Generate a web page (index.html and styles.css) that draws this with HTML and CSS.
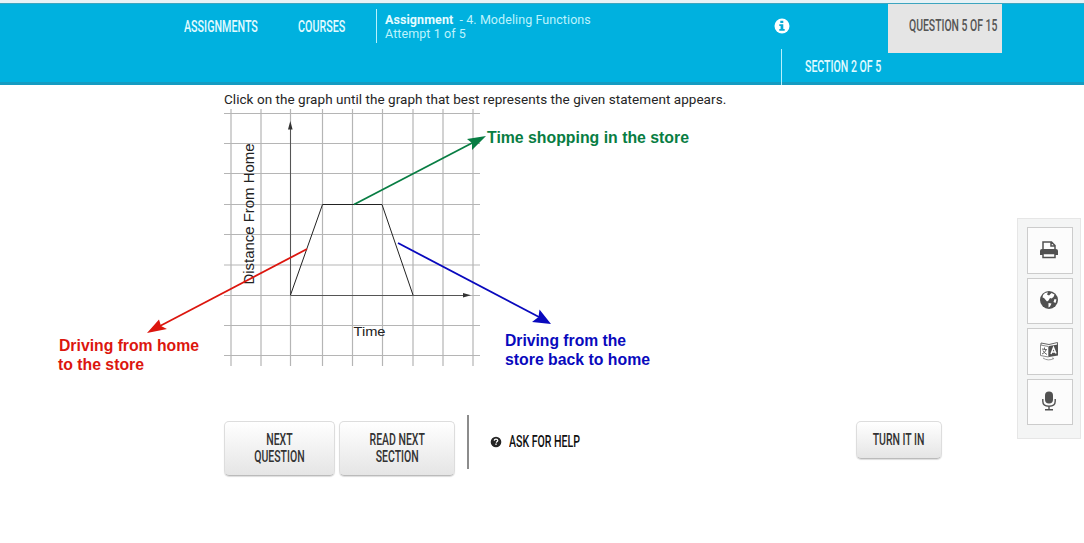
FILE: index.html
```html
<!DOCTYPE html>
<html lang="en">
<head>
    <meta charset="UTF-8">
    <meta name="viewport" content="width=device-width, initial-scale=1.0">
    <title>Assignment - 4. Modeling Functions</title>
    <link rel="stylesheet" href="styles.css">
</head>
<body>
    <!-- Top bar -->
    <header class="topbar">
        <nav class="nav">
            <a class="nav-assignments"><span class="narrow">ASSIGNMENTS</span></a>
            <a class="nav-courses"><span class="narrow">COURSES</span></a>
        </nav>
        <div class="assignment">
            <div class="assignment-title"><b>Assignment</b> <span>- 4. Modeling Functions</span></div>
            <div class="attempt">Attempt 1 of 5</div>
        </div>
        <div class="status">
            <div class="status-row">
                <svg class="info" viewBox="0 0 16 16">
                    <circle cx="8" cy="8" r="7.5" fill="#fff"/>
                    <path d="M6.3 2.8h3v2.3h-3zM5.3 6.3h4v4.7h1.4v1.7H5.3V11h1.3V8H5.3z" fill="#08a9d4"/>
                </svg>
                <div class="question"><span class="narrow">QUESTION 5 OF 15</span></div>
            </div>
            <div class="section"><span class="narrow">SECTION 2 OF 5</span></div>
        </div>
    </header>

    <div class="page">
        <main>
            <p class="instruction">Click on the graph until the graph that best represents the given statement appears.</p>

            <!-- Graph with notes -->
            <svg class="graph" width="1017" height="270" viewBox="0 107 1017 270">
                <path class="grid" d="M231 109V366M261 109V366M290.500 109V366M322.500 109V366M352.500 109V366M382.500 109V366M413 109V366M443 109V366M473 109V366M224 113.500H480M224 143.500H480M224 173.500H480M224 204.500H480M224 234.500H480M224 265H480M224 295.500H480M224 325.500H480M224 355.500H480"/>
                <path class="axis" d="M290.500 295.500V128M290.500 295.500H465"/>
                <path class="tip" d="M290.300 121l2.300 8.500h-4.600zM471 295.300l-8 2.300v-4.600z"/>
                <path class="curve" d="M290.500 295L322.500 204.500H382L413 295"/>
                <text class="axis-label" transform="translate(253.500 284.500) rotate(-90)" textLength="141" lengthAdjust="spacingAndGlyphs">Distance From Home</text>
                <text class="axis-label time" x="353.500" y="335.500" textLength="32" lengthAdjust="spacingAndGlyphs">Time</text>

                <g class="note green">
                    <path d="M354 204.500L474 142"/>
                    <polygon points="486,136 467,139 472,143 472,150"/>
                    <text x="487" y="143" textLength="202" lengthAdjust="spacingAndGlyphs">Time shopping in the store</text>
                </g>
                <g class="note red">
                    <path d="M307 249L160 326"/>
                    <polygon points="147,333 159,319.500 161,326 167,329"/>
                    <text x="59" y="351" textLength="140" lengthAdjust="spacingAndGlyphs">Driving from home</text>
                    <text x="58" y="370" textLength="86" lengthAdjust="spacingAndGlyphs">to the store</text>
                </g>
                <g class="note blue">
                    <path d="M398 243L539 317"/>
                    <polygon points="551,324 539.500,309.500 538.500,317 532,322"/>
                    <text x="505" y="346" textLength="121" lengthAdjust="spacingAndGlyphs">Driving from the</text>
                    <text x="505" y="365" textLength="145" lengthAdjust="spacingAndGlyphs">store back to home</text>
                </g>
            </svg>

            <!-- Bottom buttons -->
            <div class="actions">
                <button class="btn btn-next"><span class="narrow">NEXT<br>QUESTION</span></button>
                <button class="btn btn-read"><span class="narrow">READ NEXT<br>SECTION</span></button>
                <div class="help">
                    <svg viewBox="0 0 12 12">
                        <circle cx="6" cy="6" r="5.300" fill="#252525"/>
                        <path d="M4.200 4.700Q4.400 3.200 6 3.200T7.800 4.600Q7.800 5.500 6 6.500" fill="none" stroke="#fff" stroke-width="1.300"/>
                        <rect x="5.300" y="7.500" width="1.400" height="1.400" fill="#fff"/>
                    </svg>
                    <span class="narrow">ASK FOR HELP</span>
                </div>
                <button class="btn btn-turn"><span class="narrow">TURN IT IN</span></button>
            </div>
        </main>

        <!-- Side tools -->
        <aside class="tools">
            <button class="tool">
                <svg viewBox="0 0 20 20">
                    <path d="M4 10V2h8.500L16 5.500V10M12 2v4h4" fill="none" stroke="#515151" stroke-width="1.500"/>
                    <path d="M1 11q0-2 2-2h14q2 0 2 2v4H1z" fill="#515151"/>
                    <path d="M4 13.500v4h12v-4z" fill="#fff" stroke="#515151" stroke-width="1.500"/>
                </svg>
            </button>
            <button class="tool">
                <svg viewBox="0 0 20 20">
                    <circle cx="10" cy="10" r="9" fill="#515151"/>
                    <path d="M6 3L9 2.300 8 4.500 10 5.500 12.500 3 15.500 4.500 14.500 7 12.500 8.500 11 8 9.500 10.500 8 11.500 5 8 3.500 7.500 4 5zM9.500 13L12.500 13.500 11 16.500 9.500 17.500zM15.500 9L17.500 9.500 16.500 13 14.500 12z" fill="#fff"/>
                </svg>
            </button>
            <button class="tool">
                <svg viewBox="0 0 20 20">
                    <path d="M10 3.500L18.500 1.500V4M10 3.500L2 2V4" fill="none" stroke="#666"/>
                    <path d="M1.500 4L9.500 5.500V16L1.500 14.500z" fill="#fff" stroke="#888"/>
                    <path d="M10 5L19 3.500V14.500L10 16z" fill="#515151"/>
                    <path d="M3 8l5 .7M5.500 6.500v2M7 9q-1 3-4 4M4 9.500q1 2.500 4 4" fill="none" stroke="#666"/>
                    <path d="M12 13l2.500-6.500L17 12.500M13 11h3" fill="none" stroke="#fff" stroke-width="1.400"/>
                    <path d="M4 17q5 3.500 11 .5M15 17.500l-2-.5" fill="none" stroke="#999"/>
                </svg>
            </button>
            <button class="tool">
                <svg viewBox="0 0 20 20">
                    <rect x="6" y="0.500" width="8" height="12" rx="4" fill="#515151"/>
                    <path d="M3.800 8v2.300q0 5 6.200 5t6.200-5V8M10 15v3.500M6 18.700h8" fill="none" stroke="#515151" stroke-width="1.400"/>
                </svg>
            </button>
        </aside>
    </div>
</body>
</html>
```
FILE: styles.css
```css
* {
    box-sizing: border-box;
}

body {
    font-family: Roboto, Arial, sans-serif;
    background-color: #ffffff;
    color: #252525;
    margin: 0;
    overflow: hidden;
}

/* Condensed capitals for menu and buttons */
.narrow {
    display: inline-block;
    font-family: Roboto, sans-serif;
    font-size: 16px;
    font-weight: 500;
    line-height: 17px;
    white-space: nowrap;
    transform: scaleX(0.66);
    transform-origin: left center;
}

/* Top bar */
.topbar {
    display: flex;
    height: 85px;
    background-color: #00b1df;
    border-top: 3px solid #e7f2f6;
    border-bottom: 3px solid #159bc1;
    box-shadow: inset 0 1px 0 #3ca5bf;
    color: #e2fbff;
}

.nav {
    display: flex;
    width: 376px;
    padding: 14px 0 0 184px;
}

.nav .narrow {
    transform: scaleX(0.67);
}

.nav-assignments {
    width: 114px;
}

.nav-courses {
    width: 60px;
}

.assignment {
    width: 405px;
    height: 34px;
    margin-top: 6px;
    padding: 4px 0 0 8px;
    border-left: 1px solid #b8f1fc;
    font-size: 12.5px;
    line-height: 14px;
    letter-spacing: 0.08px;
    color: #bdf3fd;
}

.assignment b {
    color: #e4fcff;
    margin-right: 3px;
}

.status {
    width: 303px;
}

.status-row {
    display: flex;
    height: 46px;
}

.info {
    width: 16px;
    height: 16px;
    margin: 15px 98px 0 -7px;
}

.question {
    width: 114px;
    height: 49px;
    margin-top: 1px;
    padding: 12px 0 0 21px;
    background-color: #e5e5e5;
    color: #555555;
}

.question .narrow {
    transform: scaleX(0.65);
}

.section {
    width: 105px;
    height: 36px;
    padding: 8px 0 0 23px;
    border-left: 1px solid #b8f1fc;
}

/* Content */
.page {
    display: flex;
    height: 458px;
}

main {
    width: 1017px;
}

.instruction {
    height: 22px;
    margin: 0;
    padding: 4px 0 0 224px;
    font-size: 13.5px;
    line-height: 20px;
    letter-spacing: 0.05px;
    white-space: nowrap;
}

.graph {
    display: block;
}

.grid {
    stroke: #b5b5b5;
    stroke-width: 1.2;
}

.axis {
    fill: none;
    stroke: #555555;
}

.tip {
    fill: #333333;
}

.curve {
    fill: none;
    stroke: #222222;
}

.axis-label {
    font: 15px "Liberation Sans", Arial, sans-serif;
    fill: #222222;
}

.time {
    font-size: 13px;
}

.note path {
    stroke: currentColor;
    stroke-width: 1.8;
}

.note polygon {
    fill: currentColor;
}

.note text {
    font: bold 16px "Liberation Sans", Arial, sans-serif;
    fill: currentColor;
}

.green {
    color: #087d43;
}

.red {
    color: #dc160e;
}

.blue {
    color: #0909bd;
}

/* Buttons */
.actions {
    display: flex;
    padding: 38px 0 0 224px;
}

.btn {
    height: 55px;
    margin: 6px 4px 0 0;
    padding: 0 0 2px;
    display: flex;
    align-items: center;
    justify-content: center;
    background: linear-gradient(#ffffff, #e5e5e5);
    border: 1px solid #dddddd;
    border-bottom-color: #bbbbbb;
    border-radius: 5px;
    box-shadow: 0 1px 1px #dddddd;
    color: #333333;
}

.btn .narrow {
    transform: scaleX(0.655);
    transform-origin: center;
}

.btn-next {
    width: 111px;
}

.btn-read {
    width: 116px;
}

.help {
    display: flex;
    width: 389px;
    height: 54px;
    margin-left: 8px;
    padding: 18px 0 0 21px;
    border-left: 2px solid #8c8c8c;
    color: #111111;
}

.help svg {
    width: 12px;
    height: 12px;
    margin: 3px 7px 0 0;
}

.btn-turn {
    width: 86px;
    height: 38px;
    margin-right: 0;
}

/* Side tools */
.tools {
    display: flex;
    flex-direction: column;
    gap: 4px;
    width: 64px;
    height: 221px;
    margin-top: 133px;
    padding: 8px 9px;
    background-color: #f4f5f5;
    border: 1px solid #e6e6e6;
}

.tool {
    display: flex;
    align-items: center;
    justify-content: center;
    width: 46px;
    height: 46.5px;
    padding: 0 2px 1px 0;
    background-color: #fcfcfc;
    border: 1px solid #cccccc;
}

.tool svg {
    width: 20px;
    height: 20px;
}
```
